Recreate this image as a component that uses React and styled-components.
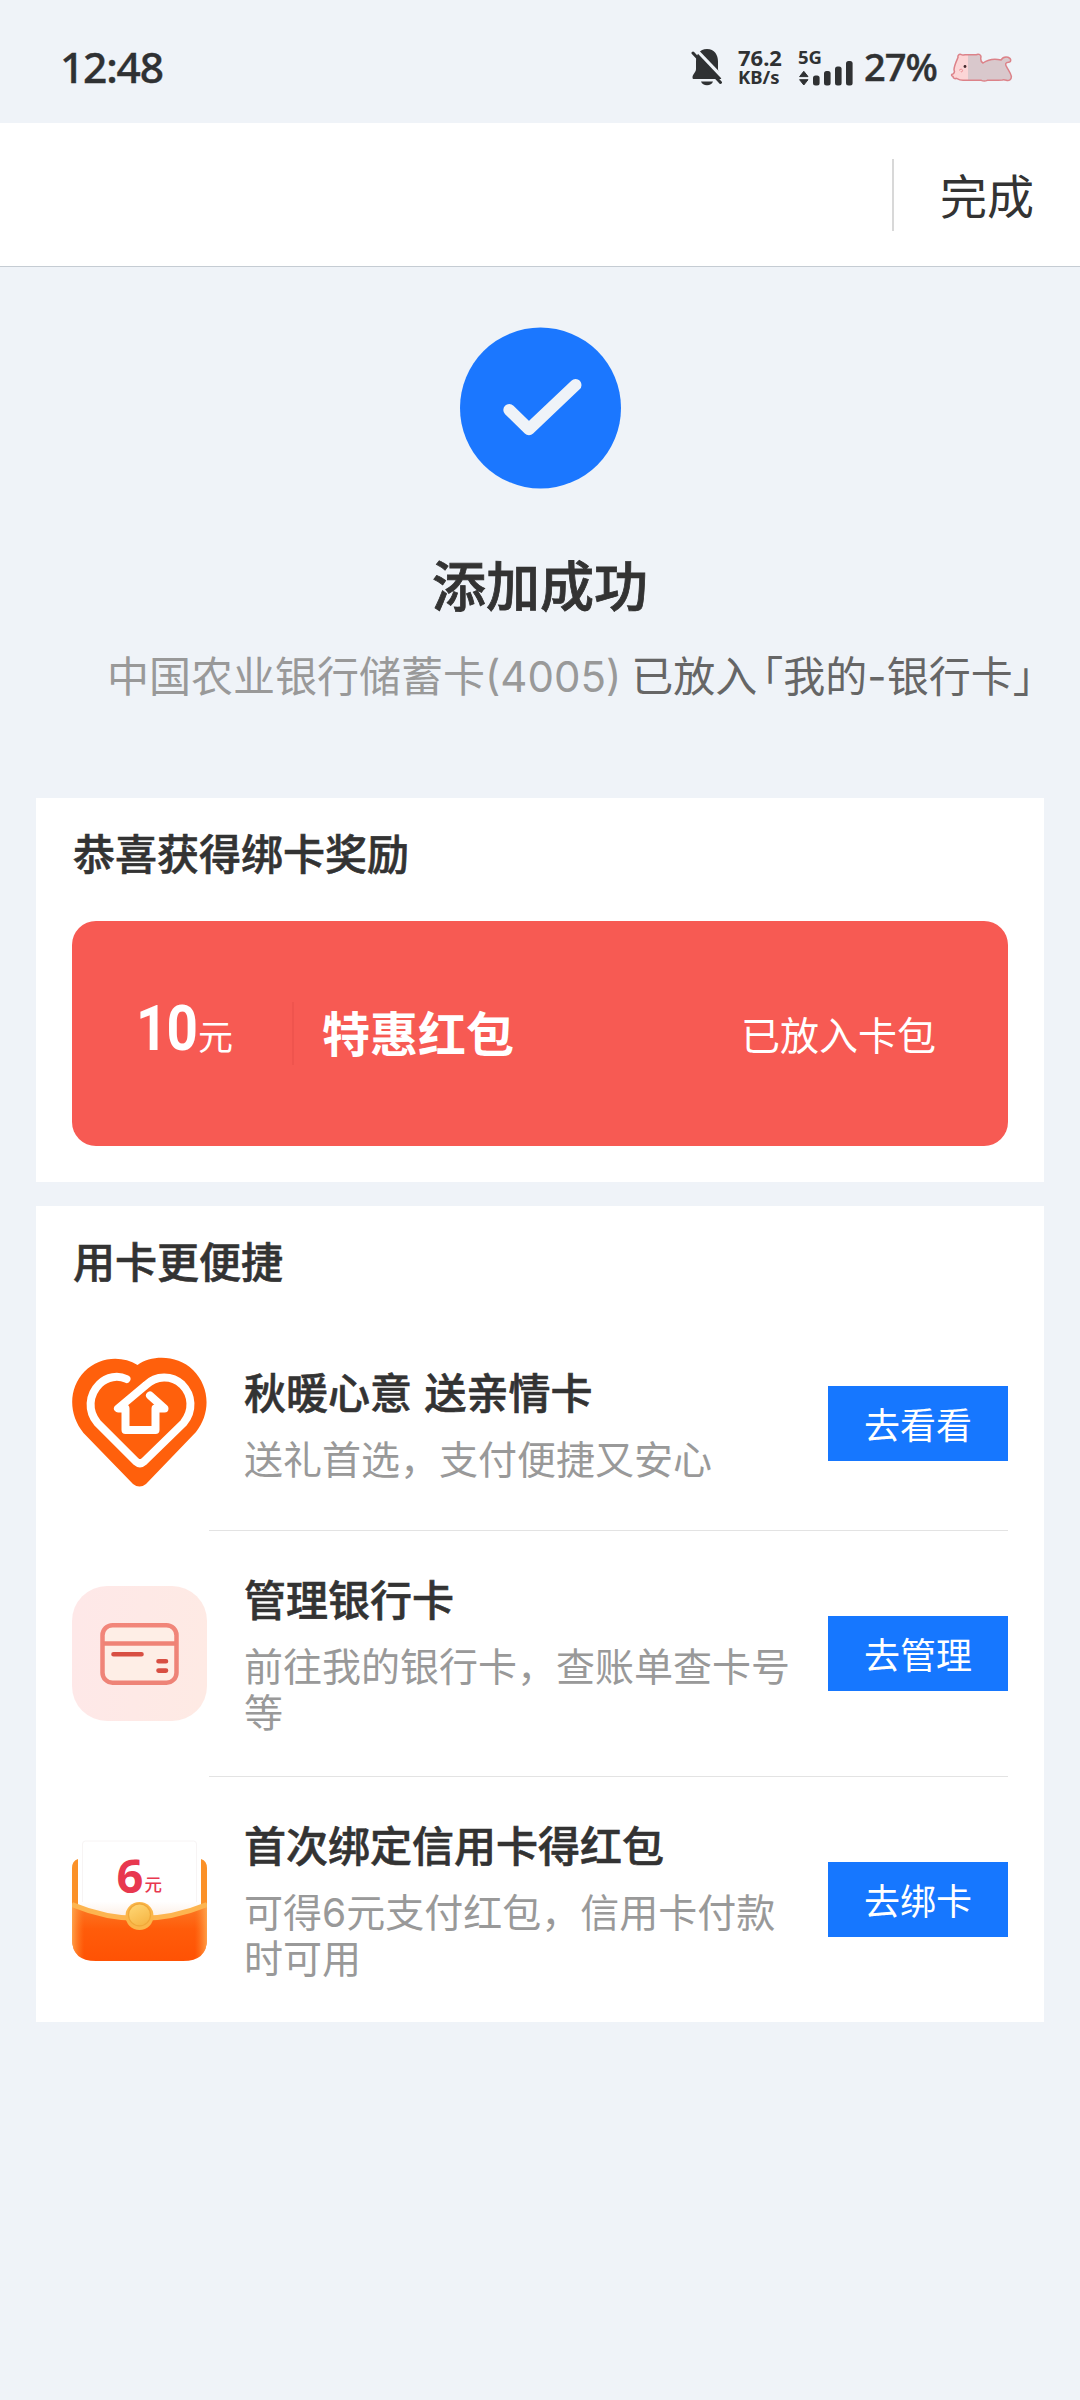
import React from 'react'
import styled, { createGlobalStyle } from 'styled-components'

const rows = [
  {
    icon: 'heart',
    title: '秋暖心意 送亲情卡',
    desc: '送礼首选，支付便捷又安心',
    action: '去看看',
  },
  {
    icon: 'card',
    title: '管理银行卡',
    desc: '前往我的银行卡，查账单查卡号等',
    action: '去管理',
  },
  {
    icon: 'envelope',
    title: '首次绑定信用卡得红包',
    desc: '可得6元支付红包，信用卡付款时可用',
    action: '去绑卡',
  },
]

// digits are set in a wider face than the Chinese text
const renderText = text =>
  text
    .split(/(\d+)/)
    .map((part, i) => (/\d/.test(part) ? <Latin key={i}>{part}</Latin> : part))

const BellOff = () => (
  <svg width="32" height="38" viewBox="0 0 32 38">
    <path
      d="M16 1C8.500 1 5 7 5 13.500V21c0 3.500-3.500 5-3.500 8.500 0 1 .5 1.500 1.500 1.500h26c1 0 1.500-.5 1.500-1.500C30.500 26 27 24.500 27 21v-7.500C27 7 23.500 1 16 1Z"
      fill="#2f3133"
    />
    <path d="M10 33.500h12c-1 2.500-3 3.700-6 3.700s-5-1.200-6-3.700Z" fill="#2f3133" />
    <path d="M5 1.500 33 31" stroke="#eff3f8" strokeWidth="3.200" />
    <path d="M2 5 29.500 34.500" stroke="#2f3133" strokeWidth="3" strokeLinecap="round" />
  </svg>
)

const Signal = () => (
  <svg width="56" height="26" viewBox="0 0 56 26" fill="#2f3133">
    <path d="M5.800 11.300 10 16.600H1.600ZM5.800 25 10 19.700H1.600Z" stroke="#2f3133" strokeLinejoin="round" />
    <rect x="15" y="15.500" width="6.600" height="10" rx="2.500" />
    <rect x="26" y="11" width="6.600" height="14.500" rx="2.500" />
    <rect x="37" y="6.500" width="6.600" height="19" rx="2.500" />
    <rect x="48" y="1" width="6.600" height="24.500" rx="2.500" />
  </svg>
)

const Pig = () => (
  <svg width="63" height="30" viewBox="0 0 63 30">
    <defs>
      <linearGradient id="pig">
        <stop offset="0.270" stopColor="#fcd5d6" />
        <stop offset="0.270" stopColor="#d9c8cc" />
      </linearGradient>
    </defs>
    <path
      d="M8 5.500C7.500 3.500 9 1.800 11 2.500c1.500 1 2 .5 4 .3h11c2-1.300 5-.5 5 2-.5 2 0 5 2 6.200 5-3.500 12-4.500 18-3 1.500-2.500 4-3.500 7-2.800 4 1.500 3 5 .5 5-3 0-3.500 2-2 4.500 1.500 3 4 6 4.800 9.500.5 3.500-2.500 4.800-5 4-1.500-.5-2.500-.6-4-.3-5 .6-10 .3-15 .4-2 1-4 1-6 0H14c-3 .3-5-.5-7.500-2-1.500.8-3.500 0-3.500-1.800C1 24 1 22 3 22c1.500-1 1.500-3 1-4 0-4 2-8 4-12.500Z"
      fill="url(#pig)"
      stroke="#dc8289"
      strokeWidth="1.500"
    />
    <circle cx="15" cy="14.500" r="1.400" fill="#43282c" />
    <path d="M9 18.500c2-2.500 4-1 3.500.5s-2 1-1 0" fill="none" stroke="#ee9297" />
  </svg>
)

const Check = () => (
  <svg width="162" height="162" viewBox="0 0 162 162">
    <circle cx="81.500" cy="81" r="80.500" fill="#1b77ff" />
    <path
      d="M50.300 83 70 102.200 116.500 58"
      fill="none"
      stroke="#eff3f8"
      strokeWidth="12"
      strokeLinecap="round"
      strokeLinejoin="round"
    />
  </svg>
)

const HeartIcon = () => (
  <svg width="135" height="135" viewBox="0 0 135 135">
    <path
      d="M65.500 9C80-1.500 106-1 121 14c17 17 18 43 3 62L74 128q-6.500 5-13 0L11.500 77C-4 58-3.500 32 12.500 15.500 27 .5 50-1 65.500 9Z"
      fill="#ff600c"
    />
    <path
      d="M54.500 23C46 19 35 20.500 27.500 28c-11 11-12 27-2 39L64 105.500q4 3.500 8 0L111.500 67c10-12 9-28-1.500-38.500-10-9.500-26-9.500-36 .5L46 52.500h7.500V74H83.500V52.500h9L78 39.500"
      fill="none"
      stroke="#fff"
      strokeWidth="8"
      strokeLinecap="round"
      strokeLinejoin="round"
    />
  </svg>
)

const CardIcon = () => (
  <svg width="135" height="135" viewBox="0 0 135 135">
    <defs>
      <linearGradient id="cardBg" x1="0" x2="1" y1="0.500" y2="0.600">
        <stop stopColor="#fee8e8" />
        <stop offset="1" stopColor="#feeae4" />
      </linearGradient>
      <linearGradient id="cardLine" x1="0" x2="0.300" y1="0" y2="1">
        <stop stopColor="#f2867a" />
        <stop offset="1" stopColor="#ee8377" />
      </linearGradient>
    </defs>
    <rect width="135" height="135" rx="35" fill="url(#cardBg)" />
    <rect
      x="30.500"
      y="39.200"
      width="74"
      height="57.500"
      rx="10"
      fill="#feeee6"
      stroke="url(#cardLine)"
      strokeWidth="4.500"
    />
    <path d="M31 57.500h73" stroke="#ef8376" strokeWidth="4.500" />
    <path d="M41.500 68.300h28M86.500 75.300h7.500M86.500 84.600h7.500" stroke="#d84f43" strokeWidth="4.600" strokeLinecap="round" />
  </svg>
)

const EnvelopeIcon = () => (
  <svg width="135" height="135" viewBox="0 0 135 135">
    <defs>
      <linearGradient id="front" x1="0" x2="0" y1="0" y2="1">
        <stop stopColor="#fb7c28" />
        <stop offset="0.450" stopColor="#ff5c0a" />
        <stop offset="1" stopColor="#ff5204" />
      </linearGradient>
      <linearGradient id="edge">
        <stop stopColor="#ffb056" stopOpacity="0.800" />
        <stop offset="0.090" stopColor="#ff8a30" stopOpacity="0" />
        <stop offset="0.910" stopColor="#ff8a30" stopOpacity="0" />
        <stop offset="1" stopColor="#ffb056" stopOpacity="0.800" />
      </linearGradient>
      <linearGradient id="paper" x1="0" x2="0" y1="0" y2="1">
        <stop offset="0.750" stopColor="#fff" />
        <stop offset="1" stopColor="#fbe9dc" />
      </linearGradient>
      <linearGradient id="coin" x1="0" x2="0.500" y1="0" y2="1">
        <stop stopColor="#ffd978" />
        <stop offset="1" stopColor="#f7b848" />
      </linearGradient>
    </defs>
    <path d="M0 75V36q0-7 6-9v48ZM135 75V36q0-7-6-9v48Z" fill="#fb9128" />
    <rect x="6" y="8" width="123" height="82" rx="5" fill="url(#paper)" />
    <path d="M10.500 70V12q0-3 3-3h108q3 0 3 3v58" fill="none" stroke="#f7f4f4" />
    <path d="M0 71q67 29 135 0v36q0 22-24 22H24Q0 129 0 107Z" fill="url(#front)" />
    <path d="M0 71q67 29 135 0v36q0 22-24 22H24Q0 129 0 107Z" fill="url(#edge)" />
    <path d="M0 72.500q67 28 135 0" fill="none" stroke="#fdb550" strokeWidth="5" />
    <circle cx="67.500" cy="84" r="14" fill="#fbb64a" />
    <circle cx="67.500" cy="82.800" r="11" fill="url(#coin)" stroke="#f0a83a" strokeWidth="1.200" />
    <EnvelopeText x="44.500" y="61" fontSize="47" fontWeight="700">
      6
    </EnvelopeText>
    <EnvelopeText x="72.500" y="59" fontSize="17.500" fontWeight="500">
      元
    </EnvelopeText>
  </svg>
)

const icons = {
  heart: HeartIcon,
  card: CardIcon,
  envelope: EnvelopeIcon,
}

const Feature = ({ item, last }) => {
  const Icon = icons[item.icon]
  return (
    <Row>
      <IconBox>
        <Icon />
      </IconBox>
      <RowBody $last={last}>
        <RowText>
          <RowTitle>{item.title}</RowTitle>
          <RowDesc>{renderText(item.desc)}</RowDesc>
        </RowText>
        <Button>{item.action}</Button>
      </RowBody>
    </Row>
  )
}

const App = () => (
  <Page>
    <Global />
    <StatusBar>
      <Clock>12:48</Clock>
      <StatusIcons>
        <BellOff />
        <Speed>
          <SpeedValue>76.2</SpeedValue>
          <SpeedUnit>KB/s</SpeedUnit>
        </Speed>
        <Network>
          <NetworkType>5G</NetworkType>
          <Signal />
        </Network>
        <Battery>27%</Battery>
        <PigBox>
          <Pig />
        </PigBox>
      </StatusIcons>
    </StatusBar>
    <NavBar>
      <NavDivider />
      <Done>完成</Done>
    </NavBar>
    <Result>
      <Check />
      <ResultTitle>添加成功</ResultTitle>
      <ResultDesc>
        中国农业银行储蓄卡<Latin>(4005)</Latin>
        <Strong>
          已放入<Bracket>「</Bracket>我的<Latin>-</Latin>银行卡<Bracket>」</Bracket>
        </Strong>
      </ResultDesc>
    </Result>
    <Panel>
      <PanelTitle>恭喜获得绑卡奖励</PanelTitle>
      <Coupon>
        <Amount>
          <Value>10</Value>
          <Unit>元</Unit>
        </Amount>
        <CouponName>特惠红包</CouponName>
        <CouponState>已放入卡包</CouponState>
      </Coupon>
    </Panel>
    <Panel>
      <PanelTitle>用卡更便捷</PanelTitle>
      <List>
        {rows.map((item, i) => (
          <Feature key={item.icon} item={item} last={i === rows.length - 1} />
        ))}
      </List>
    </Panel>
  </Page>
)

export default App

const Global = createGlobalStyle`
  * {
    box-sizing: border-box;
  }
  body {
    margin: 0;
    background: #eff3f8;
  }
  svg {
    display: block;
    flex: none;
  }
`

const Page = styled.div`
  width: 1080px;
  min-height: 2400px;
  background: #eff3f8;
  color: #333;
  font-family: 'Noto Sans CJK SC', sans-serif;
  white-space: nowrap;
`

const StatusBar = styled.div`
  display: flex;
  justify-content: space-between;
  height: 123px;
  padding: 0 67px 0 60px;
  color: #2f3133;
  font-family: 'Noto Sans', sans-serif;
`

const Clock = styled.div`
  padding-top: 37px;
  font-size: 42.5px;
  font-weight: 500;
  line-height: 60px;
  letter-spacing: -1.2px;
  -webkit-text-stroke: 0.4px;
`

const StatusIcons = styled.div`
  display: flex;
  align-items: flex-start;
  padding-top: 48px;
`

const Speed = styled.div`
  width: 45px;
  margin-left: 15px;
  font-weight: 700;
`

const SpeedValue = styled.div`
  font-size: 22px;
  line-height: 19px;
`

const SpeedUnit = styled.div`
  font-size: 18.5px;
  line-height: 19px;
`

const Network = styled.div`
  width: 56px;
  margin-left: 15px;
`

const NetworkType = styled.div`
  height: 12px;
  font-size: 18.5px;
  font-weight: 700;
  line-height: 17px;
`

const Battery = styled.div`
  width: 96px;
  padding-left: 10px;
  font-size: 38px;
  font-weight: 500;
  line-height: 36px;
  letter-spacing: -1px;
  -webkit-text-stroke: 0.5px;
`

const PigBox = styled.div`
  margin-top: 4px;
`

const NavBar = styled.div`
  display: flex;
  align-items: center;
  justify-content: flex-end;
  height: 144px;
  padding-right: 46px;
  background: #fff;
  border-bottom: 1px solid #c5ccd3;
`

const NavDivider = styled.div`
  width: 2px;
  height: 72px;
  margin-right: 46px;
  background: #d8d8d8;
`

const Done = styled.div`
  font-size: 47px;
  line-height: 60px;
  margin-top: -1px;
`

const Result = styled.div`
  display: flex;
  flex-direction: column;
  align-items: center;
  height: 531px;
  padding-top: 60px;
`

const ResultTitle = styled.div`
  margin-top: 65px;
  font-size: 54px;
  font-weight: 500;
  line-height: 60px;
  -webkit-text-stroke: 0.8px;
`

const ResultDesc = styled.div`
  display: flex;
  align-self: stretch;
  align-items: baseline;
  margin-top: 30px;
  padding-left: 107px;
  font-size: 42px;
  line-height: 60px;
  color: #999;
`

const Latin = styled.span`
  font-family: Inter, 'Noto Sans', sans-serif;
  font-weight: 400;
  line-height: 1;
`

const Strong = styled.span`
  margin-left: 10px;
  color: #666;
`

const Bracket = styled.span`
  margin-left: 5px;
  font-feature-settings: 'halt';

  &:last-child {
    margin-left: 0;
  }
`

const Panel = styled.section`
  margin: 0 36px 24px;
  padding: 24px 36px 36px;
  background: #fff;

  &:last-child {
    padding-bottom: 0;
  }
`

const PanelTitle = styled.div`
  padding-left: 1px;
  font-size: 42px;
  font-weight: 500;
  line-height: 60px;
  -webkit-text-stroke: 0.6px;
`

const Coupon = styled.div`
  display: flex;
  align-items: center;
  height: 225px;
  margin-top: 39px;
  padding: 0 72px 0 64px;
  border-radius: 24px;
  background: #f75a53;
  color: #fff;
`

const Amount = styled.div`
  display: flex;
  align-items: baseline;
  width: 158px;
  height: 63px;
  border-right: 2px solid #ef544e;
`

const Value = styled.span`
  width: 62px;
  font-family: Roboto, sans-serif;
  font-size: 63px;
  font-weight: 700;
  line-height: 54px;
  letter-spacing: -1px;
  transform: scaleX(0.87);
  transform-origin: left;
`

const Unit = styled.span`
  padding-bottom: 3px;
  font-size: 35px;
  line-height: 36px;
`

const CouponName = styled.div`
  flex: 1;
  margin: -6px 0 0 28px;
  font-size: 48px;
  font-weight: 700;
`

const CouponState = styled.div`
  margin-top: -2px;
  font-size: 39px;
`

const List = styled.div`
  margin-top: 26px;
`

const Row = styled.div`
  display: flex;
  align-items: center;
  min-height: 215px;
`

const IconBox = styled.div`
  margin: 0 2px 1px 0;
`

const RowBody = styled.div`
  display: flex;
  flex: 1;
  align-items: center;
  justify-content: space-between;
  min-height: 215px;
  padding: 37px 0 37px 35px;
  border-bottom: ${({ $last }) => ($last ? 'none' : '1px solid #e3e3e3')};
`

const RowText = styled.div`
  width: 549px;
  padding-bottom: 6px;
`

const RowTitle = styled.div`
  font-size: 42px;
  font-weight: 500;
  line-height: 60px;
  word-spacing: 3px;
  -webkit-text-stroke: 0.6px;
`

const RowDesc = styled.div`
  margin-top: 13px;
  font-size: 39px;
  line-height: 46px;
  color: #999;
  white-space: normal;
`

const Button = styled.button`
  width: 180px;
  height: 75px;
  padding: 0 0 1px;
  border: 0;
  background: #1677ff;
  color: #fff;
  font-family: inherit;
  font-size: 36px;
`

const EnvelopeText = styled.text`
  fill: #e8384f;
  font-family: 'Open Sans', 'Noto Sans CJK SC', sans-serif;
`
